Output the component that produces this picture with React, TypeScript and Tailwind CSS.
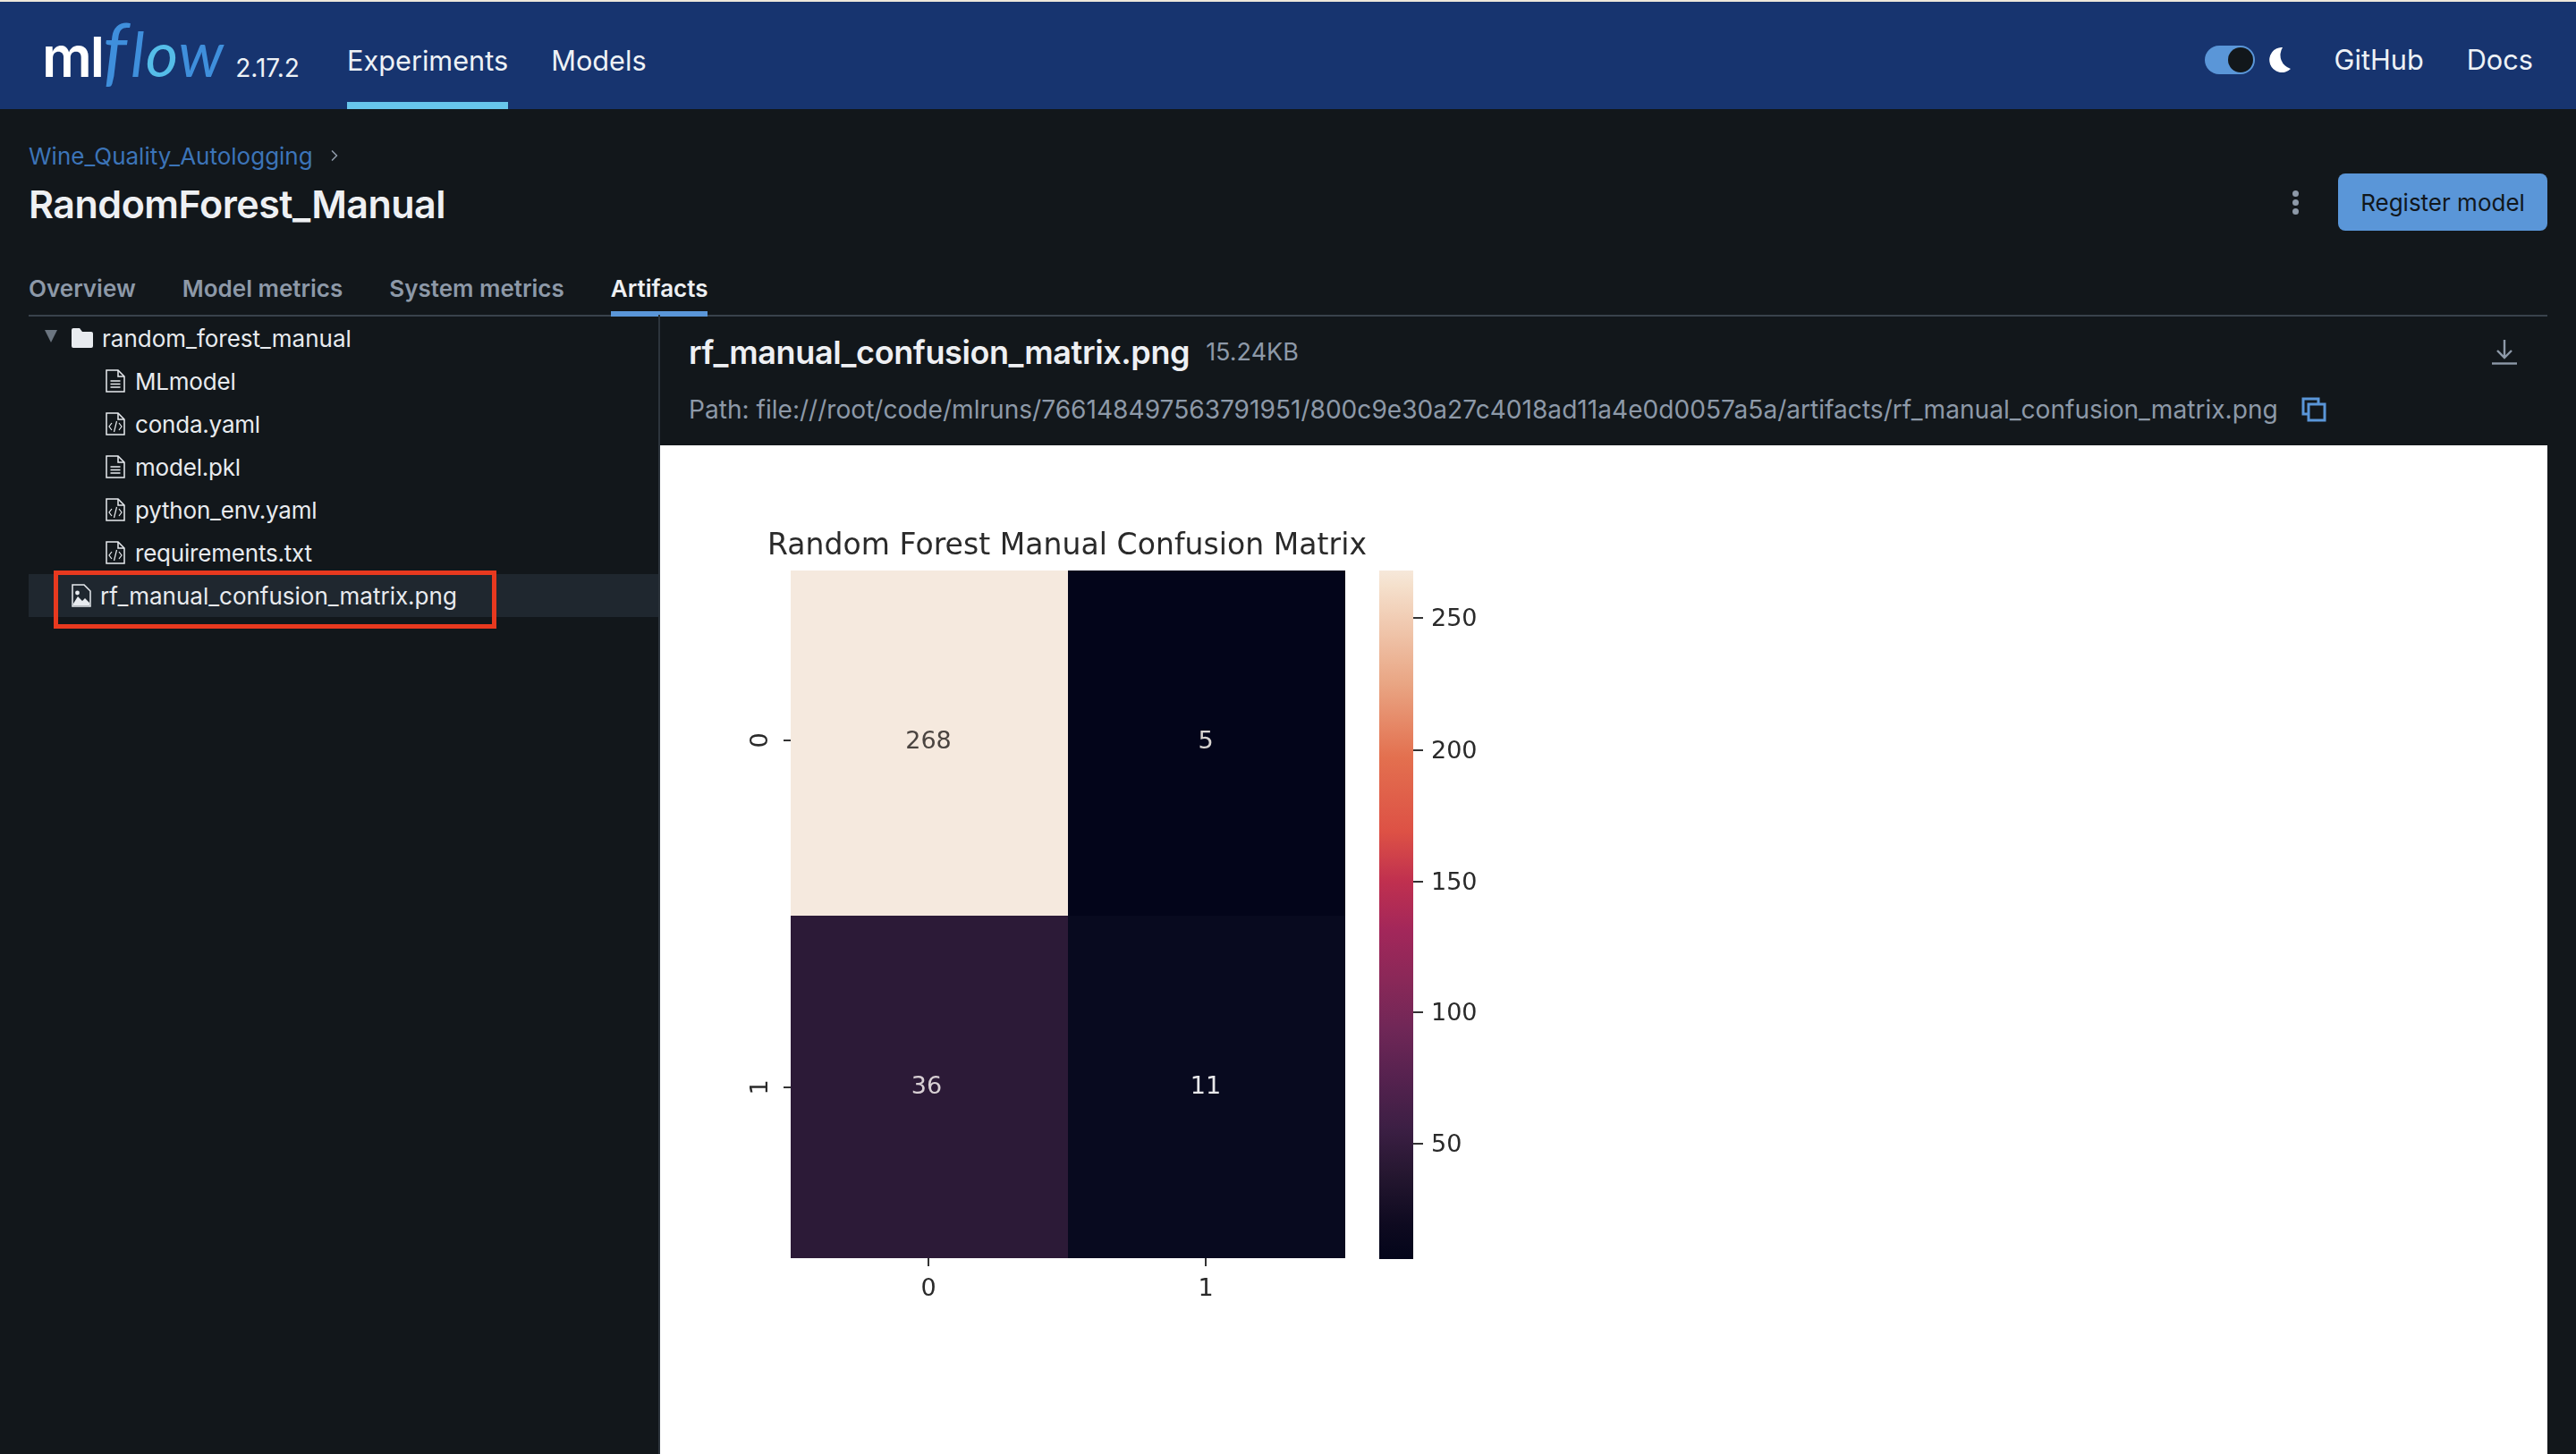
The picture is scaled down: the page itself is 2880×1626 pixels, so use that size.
import { ChevronRight } from 'lucide-react'

const font = { fontFamily: 'Inter, "Noto Sans", sans-serif' }

function FileOutline({ children }: { children?: React.ReactNode }) {
  return (
    <svg width="22" height="26" viewBox="0 0 22 26" fill="none" stroke="#e8ebef" strokeWidth="1.5" className="shrink-0">
      <path d="M1 1h13l7 7v17H1z" />
      <path d="M14 1v7h7" />
      {children}
    </svg>
  )
}

const TextLines = () => <path d="M5.5 13h11M5.5 16.5h11M5.5 20h11" strokeWidth="1.4" />
const CodeMarks = () => <path d="M7 12l-3 4 3 4M15 12l3 4-3 4M12.5 10l-3 12" strokeWidth="1.2" />

function ImageFileIcon() {
  return (
    <svg width="22" height="26" viewBox="0 0 22 26" fill="none" stroke="#e8ebef" strokeWidth="1.5" className="shrink-0">
      <path d="M1 1h13l7 7v17H1z" />
      <circle cx="6.5" cy="10" r="2.4" fill="#e8ebef" stroke="none" />
      <path d="M2 22l5-8 5 5 3-3 5 5v3H2z" fill="#e8ebef" stroke="none" />
    </svg>
  )
}

function Logo() {
  return (
    <div className="flex items-baseline pl-[47px] pt-[12px] w-[388px]">
      <span className="text-[62px] leading-[80px] font-semibold tracking-[-2px] text-white">ml</span>
      <span className="text-[84px] leading-[80px] italic font-normal text-[#3f8fdc] tracking-[4px]" style={{ fontFamily: 'Lato, sans-serif' }}>
        f
      </span>
      <span className="text-[70px] leading-[80px] italic font-normal text-[#3f8fdc] tracking-[1px]" style={{ fontFamily: 'Lato, sans-serif' }}>
        l<span className="text-[#55bde8]">o</span>w
      </span>
      <span className="text-[28px] leading-none text-[#eef2f6] ml-[12px]">2.17.2</span>
    </div>
  )
}

function Header() {
  return (
    <header className="h-[120px] bg-[#17346f] flex items-stretch text-[30.7px] text-[#eef2f6]">
      <Logo />
      <nav className="flex gap-[48px]">
        <a className="flex items-center border-b-8 border-[#67c5ec] pt-[20px]">Experiments</a>
        <a className="flex items-center border-b-8 border-transparent pt-[20px]">Models</a>
      </nav>
      <div className="ml-auto flex items-center pr-[48px] pt-[10px]">
        <div className="w-[56px] h-[32px] rounded-full bg-[#5a96d8] flex items-center justify-end pr-[2px]">
          <div className="w-[28px] h-[28px] rounded-full bg-[#12171b]" />
        </div>
        <svg width="25" height="28" viewBox="0 0 25 28" className="ml-[16px]">
          <path d="M15 0A14 14 0 1 0 24 24 16 16 0 0 1 15 0z" fill="#fff" />
        </svg>
        <a className="ml-[48px]">GitHub</a>
        <a className="ml-[48px]">Docs</a>
      </div>
    </header>
  )
}

const treeFiles = [
  { name: 'MLmodel', icon: <TextLines /> },
  { name: 'conda.yaml', icon: <CodeMarks /> },
  { name: 'model.pkl', icon: <TextLines /> },
  { name: 'python_env.yaml', icon: <CodeMarks /> },
  { name: 'requirements.txt', icon: <CodeMarks /> },
]

function Tree() {
  return (
    <aside className="w-[704px] shrink-0 relative pt-[2px] text-[26px] text-[#e8ebef] border-r-2 border-[#2c343c] box-content">
      <div className="h-[48px] flex items-center pl-[18px]">
        <svg width="14" height="14" viewBox="0 0 14 14" className="-mt-[4px]">
          <path d="M0 0h14L7 14z" fill="#6b7580" />
        </svg>
        <svg width="24" height="22" viewBox="0 0 24 22" className="ml-[16px]">
          <path d="M2 0h7l3 4h10a2 2 0 0 1 2 2v14a2 2 0 0 1-2 2H2a2 2 0 0 1-2-2V2a2 2 0 0 1 2-2z" fill="#e8ebef" />
        </svg>
        <span className="ml-[10px]">random_forest_manual</span>
      </div>
      {treeFiles.map((file) => (
        <div key={file.name} className="h-[48px] flex items-center pl-[86px] gap-[11px]">
          <FileOutline>{file.icon}</FileOutline>
          <span className="tracking-[-0.2px]">{file.name}</span>
        </div>
      ))}
      <div className="h-[48px] flex items-center pl-[48px] gap-[10px] bg-[#1f272f]">
        <ImageFileIcon />
        <span>rf_manual_confusion_matrix.png</span>
      </div>
      {/* annotation box drawn over the screenshot */}
      <div className="absolute left-[28px] top-[286px] w-[495px] h-[65px] border-[5px] border-[#e8391f]" />
    </aside>
  )
}

const cbTicks = [
  { y: 691, label: '250' },
  { y: 839, label: '200' },
  { y: 986, label: '150' },
  { y: 1132, label: '100' },
  { y: 1279, label: '50' },
]

const rocketStops = [
  [0, '#03051a'],
  [0.05, '#0e0a20'],
  [0.12, '#24162f'],
  [0.19, '#3c1f44'],
  [0.264, '#56224f'],
  [0.335, '#702757'],
  [0.406, '#8a2858'],
  [0.478, '#a3275a'],
  [0.549, '#c0304f'],
  [0.62, '#dd5145'],
  [0.729, '#e3704f'],
  [0.835, '#e9a583'],
  [0.978, '#f5e0cc'],
  [1, '#f6e8da'],
] as const

function Heatmap() {
  return (
    <svg
      width="1000"
      height="1128"
      viewBox="738 498 1000 1128"
      className="block blur-[0.7px]"
      style={{ fontFamily: '"DejaVu Sans", sans-serif' }}
    >
      <defs>
        <linearGradient id="rocket" x1="0" y1="1" x2="0" y2="0">
          {rocketStops.map(([offset, color]) => (
            <stop key={offset} offset={offset} stopColor={color} />
          ))}
        </linearGradient>
      </defs>
      <text x="1193" y="620" textAnchor="middle" fontSize="33" fill="#2a2a2a" textLength="670">
        Random Forest Manual Confusion Matrix
      </text>
      <rect x="884" y="638" width="310" height="386" fill="#f5e9de" />
      <rect x="1194" y="638" width="310" height="386" fill="#03051a" />
      <rect x="884" y="1024" width="310" height="383" fill="#2c1a37" />
      <rect x="1194" y="1024" width="310" height="383" fill="#080a1f" />
      <g fontSize="27" textAnchor="middle">
        <text x="1038" y="837" fill="#4a4440">268</text>
        <text x="1348" y="837" fill="#d8d4d0">5</text>
        <text x="1036" y="1223" fill="#d8d0d4">36</text>
        <text x="1348" y="1223" fill="#e8e8ea">11</text>
      </g>
      <g stroke="#333" strokeWidth="2">
        <path d="M876 828h8M876 1216h8M1038 1407v9M1348 1407v9" />
      </g>
      <g fontSize="27" textAnchor="middle" fill="#2a2a2a">
        <text x="1038" y="1449">0</text>
        <text x="1348" y="1449">1</text>
        <text transform="translate(858 828) rotate(-90)">0</text>
        <text transform="translate(858 1216) rotate(-90)">1</text>
      </g>
      <rect x="1542" y="638" width="38" height="770" fill="url(#rocket)" />
      {cbTicks.map((tick) => (
        <g key={tick.label}>
          <path d={`M1580 ${tick.y}h11`} stroke="#333" strokeWidth="2" />
          <text x="1600" y={tick.y + 9} fontSize="27" fill="#2a2a2a">
            {tick.label}
          </text>
        </g>
      ))}
    </svg>
  )
}

function Preview() {
  return (
    <section className="flex-1 flex flex-col min-w-0">
      <div className="h-[146px] shrink-0 pl-[32px] pr-[34px] pt-[20px]">
        <div className="flex items-center h-[44px]">
          <span className="text-[36px] font-semibold text-[#eef0f3] tracking-[-0.4px]">rf_manual_confusion_matrix.png</span>
          <span className="ml-[18px] text-[27px] text-[#8d99a8]">15.24KB</span>
          <svg width="28" height="28" viewBox="0 0 28 28" fill="none" stroke="#8d99a8" strokeWidth="2.4" className="ml-auto">
            <path d="M14 0v19M6 12l8 8 8-8" />
            <path d="M0 26.5h28" />
          </svg>
        </div>
        <div className="flex items-center mt-[22px] h-[40px] text-[28.1px] text-[#8d99a8]">
          <span>Path: file:///root/code/mlruns/766148497563791951/800c9e30a27c4018ad11a4e0d0057a5a/artifacts/rf_manual_confusion_matrix.png</span>
          <svg width="28" height="28" viewBox="0 0 28 28" fill="none" stroke="#5a96d8" strokeWidth="3" className="ml-[26px]">
            <path d="M19 7V2H2v17h5" />
            <rect x="8" y="8" width="18" height="18" />
          </svg>
        </div>
      </div>
      <div className="flex-1 bg-white overflow-hidden">
        <Heatmap />
      </div>
    </section>
  )
}

export default function App() {
  const tabs = ['Overview', 'Model metrics', 'System metrics']
  return (
    <div className="h-[1626px] w-[2880px] overflow-hidden flex flex-col bg-[#12171b]" style={font}>
      <div className="h-[2px] bg-[#efe8da] shrink-0" />
      <Header />
      <main className="flex-1 flex flex-col px-[32px] min-h-0">
        <div className="shrink-0 h-[232px] -mb-[2px]">
          <div className="flex justify-between h-[178px]">
            <div className="pt-[36px]">
              <div className="flex items-center h-[32px] text-[26px] text-[#3c74b8]">
                Wine_Quality_Autologging
                <ChevronRight className="ml-[14px] text-[#8d99a8]" size={20} />
              </div>
              <h1 className="text-[43px] leading-[56px] font-semibold text-[#eef0f3] mt-[10px] tracking-[-0.5px]">RandomForest_Manual</h1>
            </div>
            <div className="flex items-center gap-[44px] self-start mt-[72px]">
              <div className="flex flex-col gap-[3px]">
                <span className="w-[7px] h-[7px] rounded-full bg-[#8d99a8]" />
                <span className="w-[7px] h-[7px] rounded-full bg-[#8d99a8]" />
                <span className="w-[7px] h-[7px] rounded-full bg-[#8d99a8]" />
              </div>
              <button className="w-[234px] h-[64px] rounded-[8px] bg-[#5a96d8] text-[26px] text-[#11171c]">Register model</button>
            </div>
          </div>
          <div className="flex gap-[52px] text-[26px] font-semibold text-[#8d99a8] border-b-2 border-[#39424c]">
            {tabs.map((tab) => (
              <span key={tab} className="h-[52px] pb-[8px] flex items-center">{tab}</span>
            ))}
            <span className="h-[54px] pb-[4px] flex items-center text-[#eef0f3] border-b-[6px] border-[#5a96d8] -mb-[2px]">Artifacts</span>
          </div>
        </div>
        <div className="flex-1 flex min-h-0">
          <Tree />
          <Preview />
        </div>
      </main>
    </div>
  )
}
